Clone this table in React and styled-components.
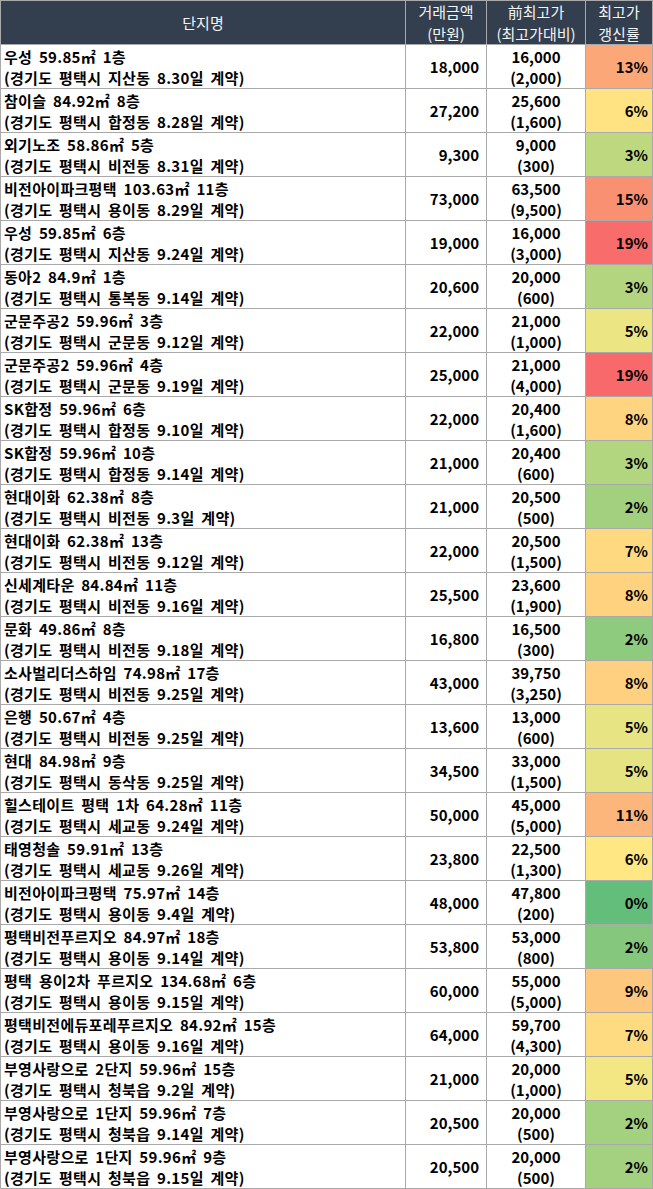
import { createGlobalStyle, styled } from "styled-components";

const GlobalStyle = createGlobalStyle`
  body {
    margin: 0;
    background: #fff;
    font-family: "Noto Sans CJK KR", "Noto Sans", sans-serif;
  }
`;

const Table = styled.div`
  display: grid;
  grid-template-columns: 404px 80px 98px 66px;
  grid-auto-rows: 43px;
  gap: 1px;
  padding: 1px;
  width: 653px;
  box-sizing: border-box;
  background: #a9a9a9;
`;

const HeadCell = styled.div`
  display: flex;
  flex-direction: column;
  align-items: center;
  justify-content: center;
  background: #333f4f;
  color: #f4f4f4;
  font-size: 15px;
  line-height: 22px;
  text-align: center;
  white-space: nowrap;
`;

const Cell = styled.div`
  display: flex;
  flex-direction: column;
  justify-content: center;
  align-items: ${(p) =>
    p.$align === "center" ? "center" : p.$align === "right" ? "flex-end" : "flex-start"};
  padding: ${(p) => p.$pad || "0"};
  background: ${(p) => p.$bg || "#fff"};
  color: #000;
  font-size: 15px;
  font-weight: 700;
  line-height: 21px;
  white-space: nowrap;
  overflow: hidden;
`;

const NameCell = styled(Cell)`
  padding-left: 3px;
  letter-spacing: 0.3px;
  word-spacing: 3px;
`;

const rows = [
  ["우성 59.85㎡ 1층", "경기도 평택시 지산동 8.30일 계약", 18000, 16000, 2000, "13%"],
  ["참이슬 84.92㎡ 8층", "경기도 평택시 합정동 8.28일 계약", 27200, 25600, 1600, "6%"],
  ["외기노조 58.86㎡ 5층", "경기도 평택시 비전동 8.31일 계약", 9300, 9000, 300, "3%"],
  ["비전아이파크평택 103.63㎡ 11층", "경기도 평택시 용이동 8.29일 계약", 73000, 63500, 9500, "15%"],
  ["우성 59.85㎡ 6층", "경기도 평택시 지산동 9.24일 계약", 19000, 16000, 3000, "19%"],
  ["동아2 84.9㎡ 1층", "경기도 평택시 통복동 9.14일 계약", 20600, 20000, 600, "3%"],
  ["군문주공2 59.96㎡ 3층", "경기도 평택시 군문동 9.12일 계약", 22000, 21000, 1000, "5%"],
  ["군문주공2 59.96㎡ 4층", "경기도 평택시 군문동 9.19일 계약", 25000, 21000, 4000, "19%"],
  ["SK합정 59.96㎡ 6층", "경기도 평택시 합정동 9.10일 계약", 22000, 20400, 1600, "8%"],
  ["SK합정 59.96㎡ 10층", "경기도 평택시 합정동 9.14일 계약", 21000, 20400, 600, "3%"],
  ["현대이화 62.38㎡ 8층", "경기도 평택시 비전동 9.3일 계약", 21000, 20500, 500, "2%"],
  ["현대이화 62.38㎡ 13층", "경기도 평택시 비전동 9.12일 계약", 22000, 20500, 1500, "7%"],
  ["신세계타운 84.84㎡ 11층", "경기도 평택시 비전동 9.16일 계약", 25500, 23600, 1900, "8%"],
  ["문화 49.86㎡ 8층", "경기도 평택시 비전동 9.18일 계약", 16800, 16500, 300, "2%"],
  ["소사벌리더스하임 74.98㎡ 17층", "경기도 평택시 비전동 9.25일 계약", 43000, 39750, 3250, "8%"],
  ["은행 50.67㎡ 4층", "경기도 평택시 비전동 9.25일 계약", 13600, 13000, 600, "5%"],
  ["현대 84.98㎡ 9층", "경기도 평택시 동삭동 9.25일 계약", 34500, 33000, 1500, "5%"],
  ["힐스테이트 평택 1차 64.28㎡ 11층", "경기도 평택시 세교동 9.24일 계약", 50000, 45000, 5000, "11%"],
  ["태영청솔 59.91㎡ 13층", "경기도 평택시 세교동 9.26일 계약", 23800, 22500, 1300, "6%"],
  ["비전아이파크평택 75.97㎡ 14층", "경기도 평택시 용이동 9.4일 계약", 48000, 47800, 200, "0%"],
  ["평택비전푸르지오 84.97㎡ 18층", "경기도 평택시 용이동 9.14일 계약", 53800, 53000, 800, "2%"],
  ["평택 용이2차 푸르지오 134.68㎡ 6층", "경기도 평택시 용이동 9.15일 계약", 60000, 55000, 5000, "9%"],
  ["평택비전에듀포레푸르지오 84.92㎡ 15층", "경기도 평택시 용이동 9.16일 계약", 64000, 59700, 4300, "7%"],
  ["부영사랑으로 2단지 59.96㎡ 15층", "경기도 평택시 청북읍 9.2일 계약", 21000, 20000, 1000, "5%"],
  ["부영사랑으로 1단지 59.96㎡ 7층", "경기도 평택시 청북읍 9.14일 계약", 20500, 20000, 500, "2%"],
  ["부영사랑으로 1단지 59.96㎡ 9층", "경기도 평택시 청북읍 9.15일 계약", 20500, 20000, 500, "2%"],
];

const fmt = (n) => n.toLocaleString("en-US");

// excel-like 3 colour scale: min green, 50th percentile yellow, max red
const GREEN = [99, 190, 123];
const YELLOW = [255, 235, 132];
const RED = [248, 105, 107];
const ratios = rows.map((r) => r[4] / r[3]);
const sorted = [...ratios].sort((a, b) => a - b);
const min = sorted[0];
const max = sorted[sorted.length - 1];
const mid = (() => {
  const i = (sorted.length - 1) * 0.5;
  const lo = Math.floor(i);
  return sorted[lo] + (sorted[lo + 1] - sorted[lo]) * (i - lo);
})();
const mix = (a, b, t) => `rgb(${a.map((v, i) => Math.round(v + (b[i] - v) * t)).join(",")})`;
const scale = (v) =>
  v <= mid ? mix(GREEN, YELLOW, (v - min) / (mid - min)) : mix(YELLOW, RED, (v - mid) / (max - mid));

export default function App() {
  return (
    <>
      <GlobalStyle />
      <Table>
        <HeadCell>단지명</HeadCell>
        <HeadCell>
          <span>거래금액</span>
          <span>(만원)</span>
        </HeadCell>
        <HeadCell>
          <span>前최고가</span>
          <span>(최고가대비)</span>
        </HeadCell>
        <HeadCell>
          <span>최고가</span>
          <span>갱신률</span>
        </HeadCell>
        {rows.map(([name, place, price, prev, diff, rate], i) => (
          <Row key={i} name={name} place={place} price={price} prev={prev} diff={diff} rate={rate} bg={scale(ratios[i])} />
        ))}
      </Table>
    </>
  );
}

function Row({ name, place, price, prev, diff, rate, bg }) {
  return (
    <>
      <NameCell>
        <span>{name}</span>
        <span>({place})</span>
      </NameCell>
      <Cell $align="right" $pad="0 7px 0 0">
        {fmt(price)}
      </Cell>
      <Cell $align="center">
        <span>{fmt(prev)}</span>
        <span>({fmt(diff)})</span>
      </Cell>
      <Cell $align="right" $pad="0 4px 0 0" $bg={bg}>
        {rate}
      </Cell>
    </>
  );
}
